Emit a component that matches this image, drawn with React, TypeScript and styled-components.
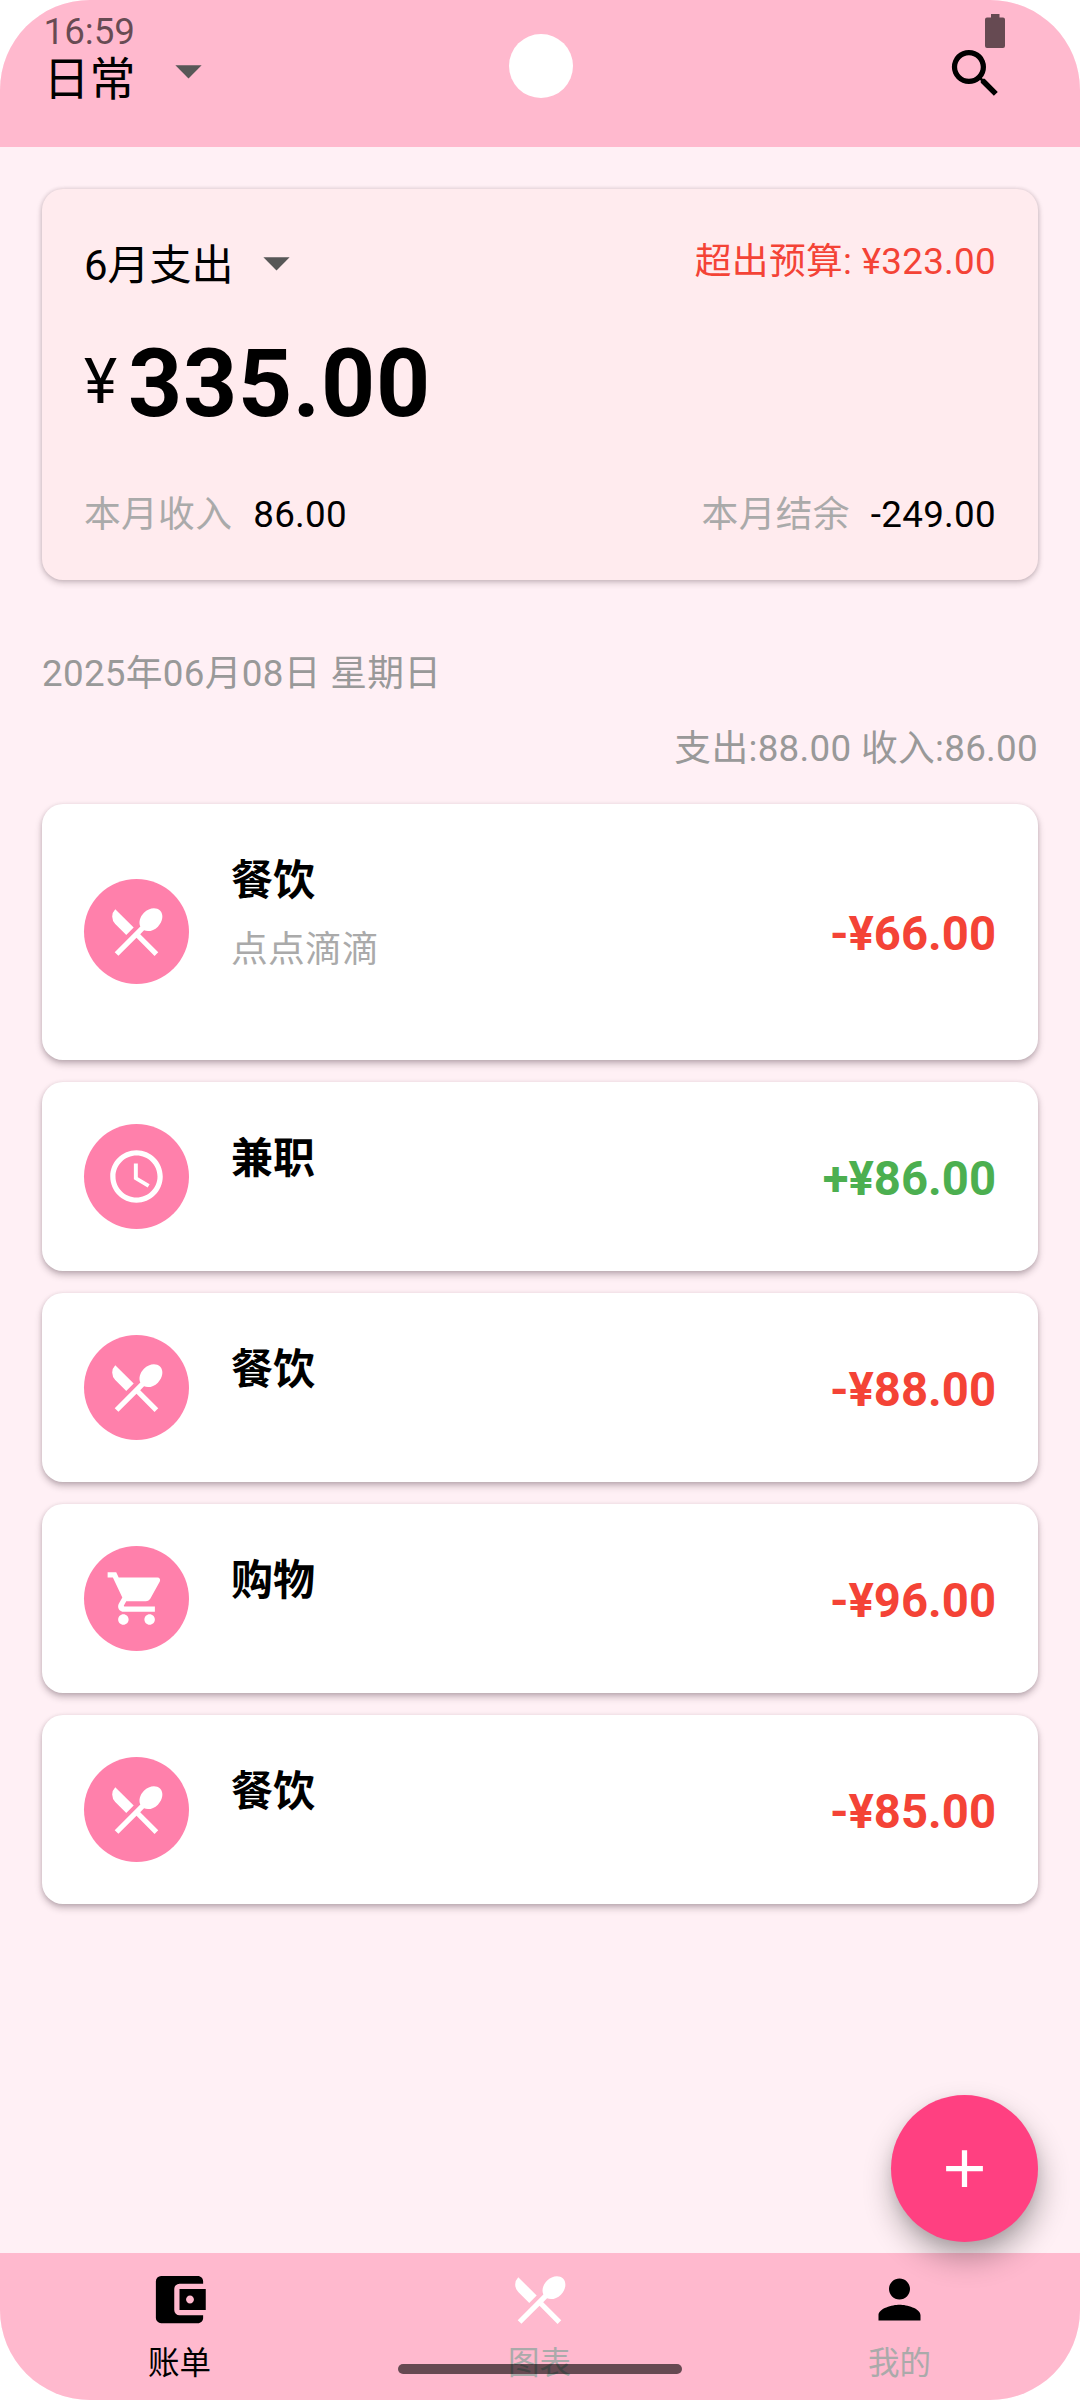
import React from "react";
import styled, { createGlobalStyle } from "styled-components";
import type { IconType } from "react-icons";
import {
  MdAccessTime,
  MdAccountBalanceWallet,
  MdAdd,
  MdArrowDropDown,
  MdPerson,
  MdRestaurantMenu,
  MdSearch,
  MdShoppingCart,
} from "react-icons/md";

const color = {
  bar: "#ffb9ce",
  page: "#fff0f5",
  summary: "#ffebee",
  badge: "#ff80ab",
  accent: "#ff4081",
  expense: "#f44336",
  income: "#4caf50",
  muted: "#aaaaaa",
  date: "#999999",
  system: "rgba(0, 0, 0, 0.6)",
};

const GlobalStyle = createGlobalStyle`
  *, *::before, *::after { box-sizing: border-box; }
  body {
    margin: 0;
    background: #fff;
    color: #000;
    font-family: Roboto, "Noto Sans CJK SC", sans-serif;
  }
  svg { display: block; flex: none; }
`;

const Phone = styled.div`
  position: relative;
  display: flex;
  flex-direction: column;
  width: 1080px;
  height: 2400px;
  overflow: hidden;
  border-radius: 90px;
  background: ${color.page};
`;

const StatusBar = styled.div`
  position: absolute;
  top: 0;
  left: 0;
  right: 0;
  display: flex;
  justify-content: space-between;
  align-items: flex-start;
  padding: 14px 75px 0 43.5px;
  color: ${color.system};
`;

const Clock = styled.span`
  font-size: 36.75px;
  line-height: 35px;
`;

const Camera = styled.div`
  position: absolute;
  top: 33.5px;
  left: 508.5px;
  width: 64px;
  height: 64px;
  border-radius: 50%;
  background: #fff;
`;

const AppBar = styled.header`
  display: flex;
  align-items: center;
  justify-content: space-between;
  flex: none;
  height: 147px;
  padding: 0 73px 0 43.5px;
  background: ${color.bar};
`;

const Picker = styled.button<{ $size: number; $gap: number; $drop: number }>`
  display: flex;
  align-items: center;
  gap: ${(p) => p.$gap}px;
  height: 63px;
  padding: 0;
  border: 0;
  background: none;
  color: #000;
  font: inherit;
  font-size: ${(p) => p.$size}px;
  line-height: 1;

  span {
    padding-top: ${(p) => p.$drop}px;
  }

  svg {
    color: #575757;
  }
`;

const LedgerPicker = styled(Picker)`
  margin-bottom: 6px;
`;

const Main = styled.main`
  display: flex;
  flex-direction: column;
  flex: 1;
  padding: 42px 42px 0;
`;

const SummaryCard = styled.section`
  display: flex;
  flex-direction: column;
  height: 391px;
  padding: 42px;
  border-radius: 21px;
  background: ${color.summary};
  box-shadow: 0 3px 6px rgba(40, 20, 30, 0.2), 0 0 4px rgba(40, 20, 30, 0.16);
`;

const SplitRow = styled.div`
  display: flex;
  justify-content: space-between;
  align-items: flex-start;
`;

const Budget = styled.span`
  color: ${color.expense};
  font-size: 36.75px;
  line-height: 61px;
  letter-spacing: 0.3px;
`;

const Total = styled.div`
  display: flex;
  gap: 11px;
  margin-top: 34px;
`;

const Currency = styled.span`
  font-size: 63px;
  line-height: 107px;
`;

const TotalValue = styled.strong`
  font-size: 94.5px;
  font-weight: 700;
  line-height: 111px;
  letter-spacing: 0.7px;
`;

const Stats = styled(SplitRow)`
  margin-top: 54px;
`;

const Stat = styled.div`
  display: flex;
  gap: 21px;
  font-size: 36.75px;
  line-height: 43px;
  letter-spacing: 0.3px;
`;

const StatLabel = styled.span`
  color: ${color.muted};
`;

const DayHeader = styled.div`
  display: flex;
  flex-direction: column;
  padding: 56px 0 18px;
  color: ${color.date};
  font-size: 36.75px;
  line-height: 75px;
  letter-spacing: 0.3px;
`;

const DayTotal = styled.span`
  align-self: flex-end;
`;

const Records = styled.div`
  display: flex;
  flex-direction: column;
  gap: 22px;
`;

const RecordCard = styled.article<{ $tall: boolean }>`
  display: flex;
  align-items: center;
  gap: 42px;
  height: ${(p) => (p.$tall ? 256 : 189)}px;
  padding: 42px 42px ${(p) => (p.$tall ? 43 : 42)}px;
  border-radius: 21px;
  background: #fff;
  box-shadow: 0 4px 7px rgba(40, 20, 30, 0.26), 0 1px 4px rgba(40, 20, 30, 0.12);
`;

const Badge = styled.div`
  display: flex;
  align-items: center;
  justify-content: center;
  width: 105px;
  height: 105px;
  border-radius: 50%;
  background: ${color.badge};
  color: #fff;
`;

const RecordText = styled.div`
  display: flex;
  flex-direction: column;
  flex: 1;
  align-self: flex-start;
  line-height: 69px;
`;

const RecordTitle = styled.span`
  font-size: 42px;
  font-weight: 700;
`;

const RecordNote = styled.span`
  color: ${color.muted};
  font-size: 36.75px;
  letter-spacing: 0.25px;
`;

const Amount = styled.span<{ $income: boolean }>`
  padding-top: 4px;
  color: ${(p) => (p.$income ? color.income : color.expense)};
  font-size: 47.25px;
  font-weight: 700;
  line-height: 56px;
`;

const AddButton = styled.button`
  position: absolute;
  right: 42px;
  bottom: 158px;
  display: flex;
  align-items: center;
  justify-content: center;
  width: 147px;
  height: 147px;
  padding: 0;
  border: 0;
  border-radius: 50%;
  background: ${color.accent};
  color: #fff;
  box-shadow: 2px 16px 30px rgba(0, 0, 0, 0.3), 0 4px 12px rgba(0, 0, 0, 0.08);
`;

const NavBar = styled.nav`
  display: grid;
  grid-template-columns: repeat(3, 360px);
  flex: none;
  height: 147px;
  padding-top: 15px;
  background: ${color.bar};
`;

const Tab = styled.a<{ $icon: string; $label: string }>`
  display: flex;
  flex-direction: column;
  align-items: center;
  padding-right: 1px;
  color: ${(p) => p.$label};
  font-size: 31.5px;
  line-height: 66px;

  svg {
    color: ${(p) => p.$icon};
  }
`;

const HomeIndicator = styled.div`
  position: absolute;
  bottom: 26px;
  left: 398px;
  width: 284px;
  height: 10px;
  border-radius: 5px;
  background: ${color.system};
`;

const BatteryIcon = () => (
  <svg width="20" height="34" viewBox="0 0 20 34" fill="currentColor">
    <path d="M6 0h8.500v3.500H18a2 2 0 0 1 2 2V32a2 2 0 0 1-2 2H2a2 2 0 0 1-2-2V5.500a2 2 0 0 1 2-2h4z" />
  </svg>
);

interface RecordItem {
  title: string;
  note?: string;
  amount: string;
  income?: boolean;
  icon: IconType;
}

const records: RecordItem[] = [
  { title: "餐饮", note: "点点滴滴", amount: "-¥66.00", icon: MdRestaurantMenu },
  { title: "兼职", amount: "+¥86.00", income: true, icon: MdAccessTime },
  { title: "餐饮", amount: "-¥88.00", icon: MdRestaurantMenu },
  { title: "购物", amount: "-¥96.00", icon: MdShoppingCart },
  { title: "餐饮", amount: "-¥85.00", icon: MdRestaurantMenu },
];

const tabs = [
  { label: "账单", icon: MdAccountBalanceWallet, iconColor: "#000", labelColor: "#000" },
  { label: "图表", icon: MdRestaurantMenu, iconColor: "#fff", labelColor: color.muted },
  { label: "我的", icon: MdPerson, iconColor: "#000", labelColor: color.muted },
];

export default function App() {
  return (
    <>
      <GlobalStyle />
      <Phone>
        <AppBar>
          <LedgerPicker $size={46} $gap={21.5} $drop={17}>
            <span>日常</span>
            <MdArrowDropDown size={63} />
          </LedgerPicker>
          <MdSearch size={63} />
        </AppBar>

        <Main>
          <SummaryCard>
            <SplitRow>
              <Picker $size={42} $gap={11} $drop={7}>
                <span>6月支出</span>
                <MdArrowDropDown size={63} />
              </Picker>
              <Budget>超出预算: ¥323.00</Budget>
            </SplitRow>
            <Total>
              <Currency>¥</Currency>
              <TotalValue>335.00</TotalValue>
            </Total>
            <Stats>
              <Stat>
                <StatLabel>本月收入</StatLabel>
                <span>86.00</span>
              </Stat>
              <Stat>
                <StatLabel>本月结余</StatLabel>
                <span>-249.00</span>
              </Stat>
            </Stats>
          </SummaryCard>

          <DayHeader>
            <span>2025年06月08日 星期日</span>
            <DayTotal>支出:88.00 收入:86.00</DayTotal>
          </DayHeader>

          <Records>
            {records.map(({ title, note, amount, income, icon: Icon }, i) => (
              <RecordCard key={i} $tall={Boolean(note)}>
                <Badge>
                  <Icon size={63} />
                </Badge>
                <RecordText>
                  <RecordTitle>{title}</RecordTitle>
                  {note && <RecordNote>{note}</RecordNote>}
                </RecordText>
                <Amount $income={Boolean(income)}>{amount}</Amount>
              </RecordCard>
            ))}
          </Records>
        </Main>

        <NavBar>
          {tabs.map(({ label, icon: Icon, iconColor, labelColor }) => (
            <Tab key={label} $icon={iconColor} $label={labelColor}>
              <Icon size={63} />
              <span>{label}</span>
            </Tab>
          ))}
        </NavBar>

        <AddButton aria-label="添加">
          <MdAdd size={63} />
        </AddButton>
        <StatusBar>
          <Clock>16:59</Clock>
          <BatteryIcon />
        </StatusBar>
        <Camera />
        <HomeIndicator />
      </Phone>
    </>
  );
}
